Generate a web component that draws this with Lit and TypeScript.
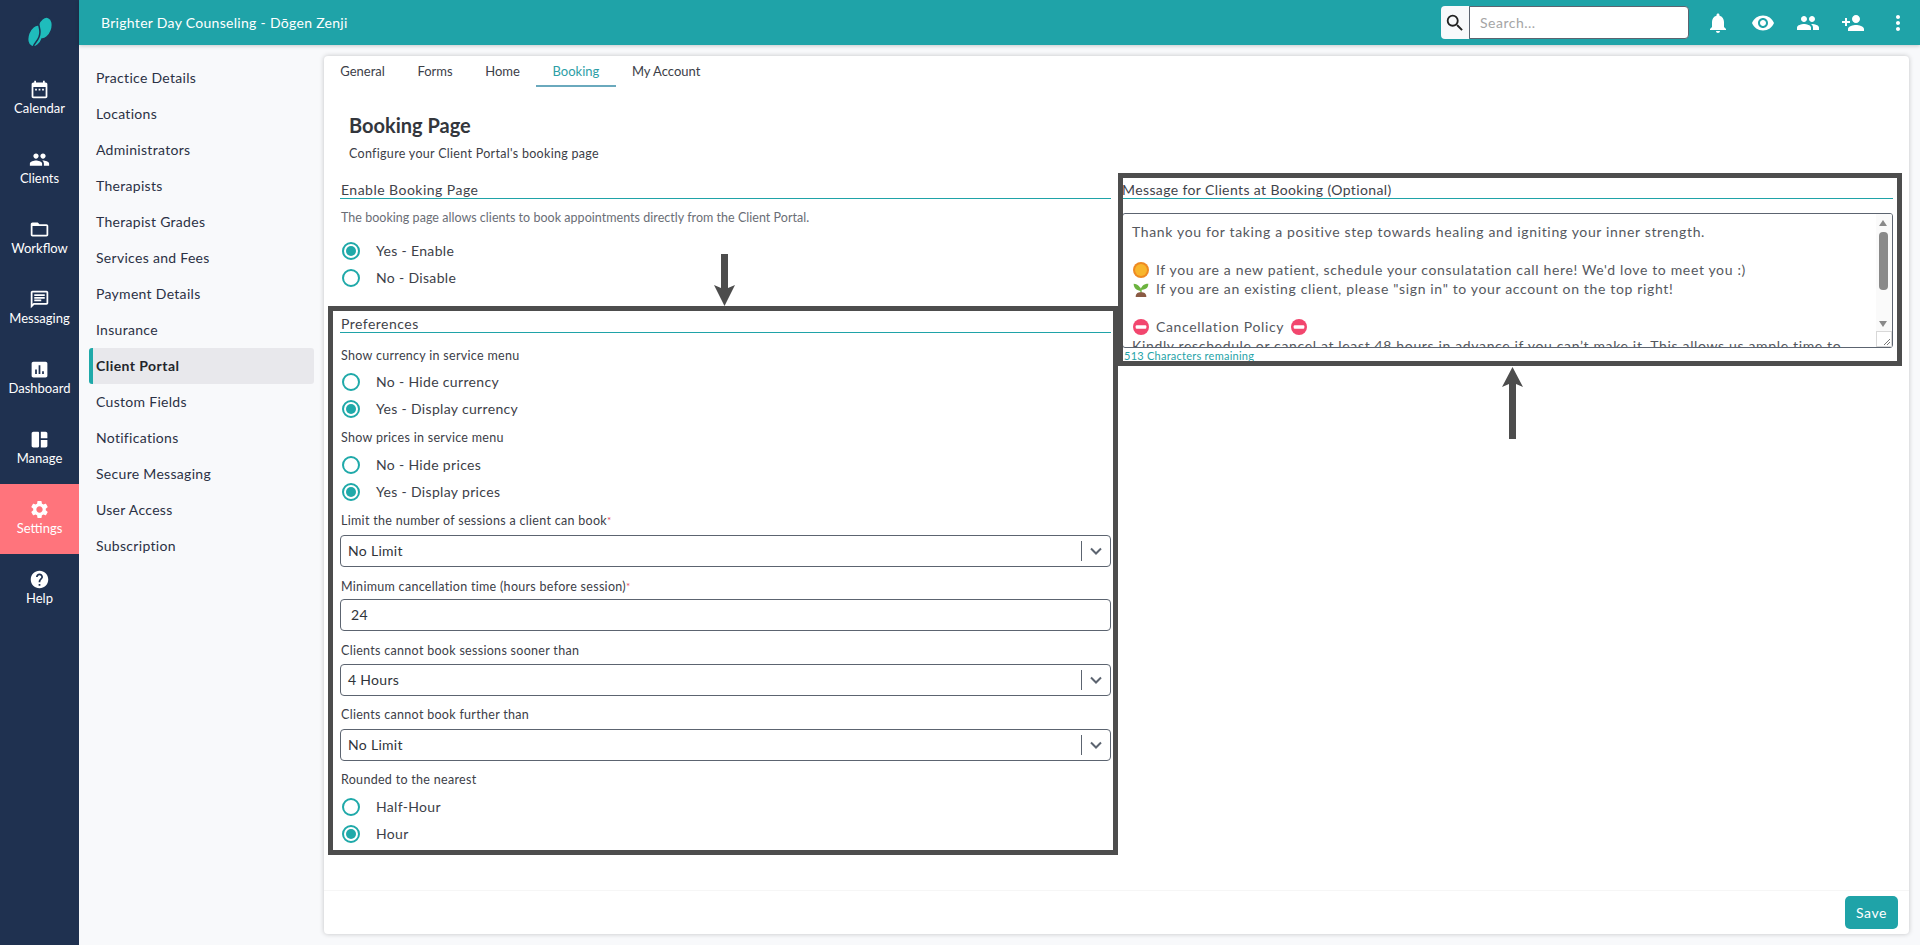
import { LitElement, html, css, svg } from "lit";
import { customElement } from "lit/decorators.js";

const railIcons: Record<string, unknown> = {
  Calendar: svg`<path d="M19 4h-1V2h-2v2H8V2H6v2H5C3.9 4 3 4.9 3 6v14c0 1.1.9 2 2 2h14c1.1 0 2-.9 2-2V6c0-1.1-.9-2-2-2zm0 16H5V9h14v11zM7 11h2v2H7zm4 0h2v2h-2zm4 0h2v2h-2z"/>`,
  Clients: svg`<path d="M16 11c1.66 0 2.99-1.34 2.99-3S17.66 5 16 5s-3 1.34-3 3 1.34 3 3 3zm-8 0c1.66 0 2.99-1.34 2.99-3S9.66 5 8 5 5 6.34 5 8s1.34 3 3 3zm0 2c-2.33 0-7 1.17-7 3.5V19h14v-2.5C15 14.17 10.33 13 8 13zm8 0c-.29 0-.62.02-.97.05 1.16.84 1.97 1.97 1.97 3.45V19h6v-2.5c0-2.33-4.67-3.5-7-3.5z"/>`,
  Workflow: svg`<path d="M20 6h-8l-2-2H4c-1.1 0-2 .9-2 2v12c0 1.1.9 2 2 2h16c1.1 0 2-.9 2-2V8c0-1.1-.9-2-2-2zm0 12H4V8h16v10z"/>`,
  Messaging: svg`<path d="M20 2H4c-1.1 0-2 .9-2 2v18l4-4h14c1.1 0 2-.9 2-2V4c0-1.1-.9-2-2-2zm0 14H5.2L4 17.2V4h16v12zM6 12h8v2H6zm0-3h12v2H6zm0-3h12v2H6z"/>`,
  Dashboard: svg`<path d="M19 3H5c-1.1 0-2 .9-2 2v14c0 1.1.9 2 2 2h14c1.1 0 2-.9 2-2V5c0-1.1-.9-2-2-2zM9 17H7v-5h2v5zm4 0h-2V7h2v10zm4 0h-2v-3h2v3z"/>`,
  Manage: svg`<path d="M5 3h5c1.1 0 1.5.5 1.5 1.5v15c0 1-.4 1.5-1.5 1.5H5c-1.1 0-2-.9-2-2V5c0-1.1.9-2 2-2zm8.5 0H19c1.1 0 2 .9 2 2v5.5h-7.500V3zm0 9.500H21V19c0 1.100-.9 2-2 2h-5.500z"/>`,
  Settings: svg`<path d="M19.14 12.94c.04-.3.06-.61.06-.94 0-.32-.02-.64-.07-.94l2.03-1.58a.49.49 0 0 0 .12-.61l-1.92-3.32a.488.488 0 0 0-.59-.22l-2.39.96c-.5-.38-1.03-.7-1.62-.94l-.36-2.54a.484.484 0 0 0-.48-.41h-3.84c-.24 0-.43.17-.47.41l-.36 2.54c-.59.24-1.13.57-1.62.94l-2.39-.96c-.22-.08-.47 0-.59.22L2.74 8.87c-.12.21-.08.47.12.61l2.03 1.58c-.05.3-.09.63-.09.94s.02.64.07.94l-2.03 1.58a.49.49 0 0 0-.12.61l1.92 3.32c.12.22.37.29.59.22l2.39-.96c.5.38 1.03.7 1.62.94l.36 2.54c.05.24.24.41.48.41h3.84c.24 0 .44-.17.47-.41l.36-2.54c.59-.24 1.13-.56 1.62-.94l2.39.96c.22.08.47 0 .59-.22l1.92-3.32c.12-.22.07-.47-.12-.61l-2.01-1.58zM12 15.600c-1.980 0-3.600-1.620-3.600-3.600s1.620-3.600 3.600-3.600 3.600 1.620 3.600 3.600-1.620 3.600-3.600 3.600z"/>`,
  Help: svg`<path d="M12 2C6.480 2 2 6.480 2 12s4.480 10 10 10 10-4.480 10-10S17.520 2 12 2zm1 17h-2v-2h2v2zm2.070-7.750-.9.920C13.450 12.900 13 13.500 13 15h-2v-.5c0-1.100.45-2.100 1.170-2.830l1.240-1.260c.37-.36.59-.86.59-1.410 0-1.100-.9-2-2-2s-2 .9-2 2H8c0-2.210 1.790-4 4-4s4 1.790 4 4c0 .88-.36 1.680-.93 2.250z"/>`,
};

const topIcons = {
  bell: svg`<path d="M12 22c1.100 0 2-.9 2-2h-4c0 1.100.9 2 2 2zm6-6v-5c0-3.070-1.630-5.640-4.500-6.320V4c0-.83-.67-1.500-1.500-1.500s-1.500.67-1.500 1.500v.68C7.640 5.360 6 7.920 6 11v5l-2 2v1h16v-1l-2-2z"/>`,
  eye: svg`<path d="M12 4.500C7 4.500 2.730 7.610 1 12c1.730 4.390 6 7.500 11 7.500s9.270-3.110 11-7.500c-1.730-4.390-6-7.500-11-7.500zM12 17c-2.760 0-5-2.240-5-5s2.240-5 5-5 5 2.240 5 5-2.240 5-5 5zm0-8c-1.660 0-3 1.340-3 3s1.340 3 3 3 3-1.340 3-3-1.340-3-3-3z"/>`,
  people: railIcons.Clients,
  add: svg`<path d="M15 12c2.210 0 4-1.790 4-4s-1.790-4-4-4-4 1.790-4 4 1.790 4 4 4zm-9-2V7H4v3H1v2h3v3h2v-3h3v-2H6zm9 4c-2.670 0-8 1.340-8 4v2h16v-2c0-2.660-5.330-4-8-4z"/>`,
  more: svg`<path d="M12 8c1.100 0 2-.9 2-2s-.9-2-2-2-2 .9-2 2 .9 2 2 2zm0 2c-1.100 0-2 .9-2 2s.9 2 2 2 2-.9 2-2-.9-2-2-2zm0 6c-1.100 0-2 .9-2 2s.9 2 2 2 2-.9 2-2-.9-2-2-2z"/>`,
};

@customElement("app-root")
export class AppRoot extends LitElement {
  static styles = css`
    :host { display: block; width: 1920px; height: 945px; overflow: hidden; position: relative;
      font-family: "Lato", "Open Sans", sans-serif; color: #3c4048; background: #f8f9fb; }
    * { box-sizing: border-box; }
    .shell { display: grid; grid-template-columns: 79px 1fr; height: 945px; }
    .rail { background: #1f3150; display: flex; flex-direction: column; padding-top: 64px; position: relative; }
    .logo { position: absolute; left: 28px; top: 17px; }
    .rail-item { height: 70px; display: flex; flex-direction: column; align-items: center; padding-top: 15px; color: #fff; font-size: 13px; font-weight: 400; line-height: 16px; }
    .rail-item svg { width: 21px; height: 21px; fill: #fff; }
    .rail-item.on { background: #ff747c; }
    .right { display: flex; flex-direction: column; min-width: 0; }
    .top { height: 45px; background: #1fa3a8; color: #fff; display: flex; align-items: center; padding-left: 22px; box-shadow: 0 1px 4px rgba(0,0,0,.2); position: relative; z-index: 2; }
    .brand { font-size: 14px; letter-spacing: .3px; flex: 1; }
    .search { display: flex; height: 33px; margin-right: 17px; }
    .search-btn { width: 28px; background: #f8f9fb; border-radius: 4px 0 0 4px; display: flex; align-items: center; justify-content: center; }
    .search-btn svg { width: 22px; height: 22px; fill: #222; }
    .search-in { width: 220px; background: #fff; border: 1px solid #5c6470; border-radius: 0 4px 4px 0; font-size: 14px; color: #a5a5a5; padding: 7px 10px; letter-spacing: .5px; }
    .top-icons { display: flex; gap: 21px; padding-right: 10px; align-items: center; }
    .top-icons svg { width: 24px; height: 24px; fill: #fff; display: block; }
    .body { flex: 1; display: grid; grid-template-columns: 245px 1fr; min-height: 0; }
    .sub { padding: 15px 10px 0 10px; }
    .sub-item { height: 36px; display: flex; align-items: center; padding: 0 0 1px 7px; font-size: 14px; letter-spacing: .3px; color: #2b3145; border-radius: 3px; }
    .sub-item.on { background: #e8e8ec; border-left: 4px solid #1fa9a9; padding-left: 3px; font-weight: 700; color: #23252b; letter-spacing: .45px; }
    .card { margin: 11px 11px 11px 0; background: #fff; border-radius: 4px; box-shadow: 0 0 5px rgba(0,0,0,.22); position: relative; display: flex; flex-direction: column; }
    .tabs { display: flex; height: 31px; }
    .tab { padding: 1px 16.3px 0; font-size: 13px; color: #3c4048; display: flex; align-items: center; border-bottom: 2px solid transparent; }
    .tab.on { color: #2d9ea6; border-bottom-color: #6aa9bd; }
    .head { padding: 25px 0 0 25px; }
    h1 { margin: 0; font-size: 20px; font-weight: 700; color: #33363c; line-height: 26px; }
    .head p { margin: 8px 0 0; font-size: 12.5px; line-height: 15px; color: #3c4048; letter-spacing: .3px; }
    .cols { display: grid; grid-template-columns: 771px 771px; column-gap: 11px; padding: 19px 0 0 16px; }
    .sec { font-size: 14px; letter-spacing: .47px; line-height: 20px; height: 19px; border-bottom: 1px solid #1fa3a8; color: #3f434a; padding-left: 1px; }
    .right-col .sec { padding-left: 0; letter-spacing: .38px; }
    .note { font-size: 12.5px; color: #6a6e76; line-height: 16px; margin-top: 11px; margin-bottom: 1px; padding-left: 1px; letter-spacing: .03px; }
    .radio { display: flex; align-items: center; height: 27px; font-size: 14px; letter-spacing: .33px; color: #3c4048; padding-left: 2px; gap: 16px; }
    .radio-text { padding-bottom: 1px; }
    .dot { width: 18px; height: 18px; border-radius: 50%; border: 2px solid #1fa9a9; display: flex; align-items: center; justify-content: center; }
    .dot.on::after { content: ""; width: 10px; height: 10px; border-radius: 50%; background: #1fa9a9; }
    .lab { font-size: 12.5px; color: #3c4048; line-height: 15px; padding-left: 1px; letter-spacing: .3px; }
    .req { color: #e34a5a; font-size: 10px; vertical-align: top; }
    .field { height: 32px; border: 1px solid #5c6470; border-radius: 4px; display: flex; align-items: center; padding: 0 0 1px 7px; font-size: 14px; color: #30343a; letter-spacing: .3px; }
    .field.input { padding-left: 10px; }
    .field .val { flex: 1; }
    .caret { width: 29px; height: 20px; margin-top: 1px; border-left: 1px solid #5c6470; display: flex; align-items: center; justify-content: center; }
    .caret svg { width: 12px; height: 8px; fill: none; stroke: #5c6470; stroke-width: 2; }
    .ta { margin-top: 14px; height: 135px; border: 1px solid #5c6470; border-radius: 3px; overflow: hidden; position: relative; padding: 8px 0 0 9px; font-size: 14px; letter-spacing: .65px; line-height: 19px; color: #55585e; white-space: nowrap; }
    .ta-line { height: 19px; display: flex; align-items: center; }
    .ta-line svg { width: 16px; height: 16px; flex: none; margin: 0 7px 0 1px; }
    .ta-line svg.end { margin: 0 0 0 7px; }
    .sbar { position: absolute; right: 0; top: 0; bottom: 0; width: 16px; background: #fafafa; }
    .sbar i { position: absolute; left: 3px; width: 0; height: 0; border-left: 4.5px solid transparent; border-right: 4.5px solid transparent; }
    .sbar .up { top: 6px; border-bottom: 6px solid #8a8a8a; }
    .sbar .dn { top: 107px; border-top: 6px solid #8a8a8a; }
    .sbar .th { position: absolute; left: 3px; top: 18px; width: 9px; height: 58px; background: #8a8a8a; border-radius: 4px; }
    .grip { position: absolute; right: 0; bottom: 0; width: 16px; height: 16px; background: #fff; border: 1px solid #d8d8d8; }
    .grip svg { position: absolute; right: 0; bottom: 0; width: 10px; height: 10px; stroke: #777; fill: none; }
    .count { font-size: 11px; color: #1fa3a8; line-height: 14px; margin-top: 1px; padding-left: 2px; letter-spacing: .25px; }
    .foot { position: absolute; left: 0; right: 0; bottom: 0; height: 44px; border-top: 1px solid #f6f6f6; display: flex; justify-content: flex-end; align-items: flex-start; padding: 5px 11px 0 0; }
    .save { background: #1fa3a8; color: #fff; border-radius: 5px; font-size: 14px; letter-spacing: .6px; width: 53px; height: 33px; display: flex; align-items: center; justify-content: center; }
    .ann { position: absolute; border: 5px solid #4d4d4d; pointer-events: none; }
    .a1 { left: 4px; top: 250px; width: 790px; height: 549px; }
    .a2 { left: 794px; top: 117px; width: 784px; height: 193px; }
    .arrow { position: absolute; fill: #4d4d4d; }
    .ar1 { left: 390px; top: 198px; }
    .ar2 { left: 1178px; top: 311px; }
    .s4 { height: 4px; } .s5 { height: 5px; } .s6 { height: 6px; } .s7 { height: 7px; } .s8 { height: 8px; }
    .s9 { height: 9px; } .s10 { height: 10px; } .s11 { height: 11px; } .s12 { height: 12px; } .s15 { height: 15px; } .s23 { height: 23px; }
  `;

  radio(label: string, on = false) {
    return html`<div class="radio"><span class="dot ${on ? "on" : ""}"></span><span class="radio-text">${label}</span></div>`;
  }

  select(v: string) {
    return html`<div class="field"><span class="val">${v}</span><span class="caret"><svg viewBox="0 0 12 8"><path d="M1 1.500l5 5 5-5"/></svg></span></div>`;
  }

  render() {
    const rail = ["Calendar", "Clients", "Workflow", "Messaging", "Dashboard", "Manage", "Settings", "Help"];
    const sub = ["Practice Details", "Locations", "Administrators", "Therapists", "Therapist Grades", "Services and Fees", "Payment Details", "Insurance", "Client Portal", "Custom Fields", "Notifications", "Secure Messaging", "User Access", "Subscription"];
    const tabs = ["General", "Forms", "Home", "Booking", "My Account"];
    const stop = svg`<circle cx="12" cy="12" r="12" fill="#f2466e"/><rect x="4" y="9.500" width="16" height="5" rx="1.500" fill="#fff"/>`;
    return html`<div class="shell">
      <nav class="rail">
        <svg class="logo" width="24" height="30" viewBox="0 0 24 30"><ellipse cx="7.500" cy="19" rx="6.500" ry="10.500" transform="rotate(20 7.500 19)" fill="#1fbcbc"/><ellipse cx="16.500" cy="11" rx="6.500" ry="10.500" transform="rotate(20 16.500 11)" fill="#1fbcbc"/><path d="M11.500 0C8 8 14.500 12 11 20 9.500 24 6.500 26 5 30" fill="none" stroke="#1f3150" stroke-width="1.500"/></svg>
        ${rail.map((r) => html`<div class="rail-item ${r === "Settings" ? "on" : ""}"><svg viewBox="0 0 24 24">${railIcons[r]}</svg><span>${r}</span></div>`)}
      </nav>
      <div class="right">
        <header class="top">
          <div class="brand">Brighter Day Counseling - Dōgen Zenji</div>
          <div class="search">
            <div class="search-btn"><svg viewBox="0 0 24 24"><path d="M15.500 14h-.79l-.28-.27A6.470 6.470 0 0 0 16 9.500 6.500 6.500 0 1 0 9.500 16c1.610 0 3.090-.59 4.230-1.570l.27.28v.79l5 4.990L20.490 19l-4.990-5zm-6 0C7.010 14 5 11.990 5 9.500S7.010 5 9.500 5 14 7.010 14 9.500 11.990 14 9.500 14z"/></svg></div>
            <div class="search-in">Search...</div>
          </div>
          <div class="top-icons">
            ${Object.values(topIcons).map((i) => html`<svg viewBox="0 0 24 24">${i}</svg>`)}
          </div>
        </header>
        <div class="body">
          <aside class="sub">${sub.map((s) => html`<div class="sub-item ${s === "Client Portal" ? "on" : ""}">${s}</div>`)}</aside>
          <main class="card">
            <div class="tabs">${tabs.map((t) => html`<div class="tab ${t === "Booking" ? "on" : ""}">${t}</div>`)}</div>
            <div class="head"><h1>Booking Page</h1><p>Configure your Client Portal's booking page</p></div>
            <div class="cols">
              <div>
                <div class="sec">Enable Booking Page</div>
                <div class="note">The booking page allows clients to book appointments directly from the Client Portal.</div>
                <div class="s10"></div>
                ${this.radio("Yes - Enable", true)}${this.radio("No - Disable")}
                <div class="s23"></div>
                <div class="sec">Preferences</div>
                <div class="s15"></div>
                <div class="lab">Show currency in service menu</div>
                <div class="s5"></div>
                ${this.radio("No - Hide currency")}${this.radio("Yes - Display currency", true)}
                <div class="s8"></div>
                <div class="lab">Show prices in service menu</div>
                <div class="s6"></div>
                ${this.radio("No - Hide prices")}${this.radio("Yes - Display prices", true)}
                <div class="s8"></div>
                <div class="lab">Limit the number of sessions a client can book<span class="req">*</span></div>
                <div class="s7"></div>
                ${this.select("No Limit")}
                <div class="s12"></div>
                <div class="lab">Minimum cancellation time (hours before session)<span class="req">*</span></div>
                <div class="s5"></div>
                <div class="field input">24</div>
                <div class="s12"></div>
                <div class="lab">Clients cannot book sessions sooner than</div>
                <div class="s6"></div>
                ${this.select("4 Hours")}
                <div class="s11"></div>
                <div class="lab">Clients cannot book further than</div>
                <div class="s7"></div>
                ${this.select("No Limit")}
                <div class="s11"></div>
                <div class="lab">Rounded to the nearest</div>
                <div class="s6"></div>
                ${this.radio("Half-Hour")}${this.radio("Hour", true)}
              </div>
              <div class="right-col">
                <div class="sec">Message for Clients at Booking (Optional)</div>
                <div class="ta">
                  <div class="ta-line">Thank you for taking a positive step towards healing and igniting your inner strength.</div>
                  <div class="ta-line"></div>
                  <div class="ta-line"><svg viewBox="0 0 24 24"><circle cx="12" cy="12" r="12" fill="#ee8a22"/><circle cx="12" cy="12" r="9" fill="#f8b62d"/></svg>If you are a new patient, schedule your consulatation call here! We'd love to meet you :)</div>
                  <div class="ta-line"><svg viewBox="0 0 24 24"><path d="M12 15C12 9 8 5 1 4c0 7 5 10 11 11zM12 13c0-5 4-9 11-9 0 7-5 9-11 9z" fill="#6cb33f"/><path d="M11 10h2v9h-2z" fill="#6cb33f"/><path d="M4 24c0-5 3-7 8-7s8 2 8 7z" fill="#8a5a44"/></svg>If you are an existing client, please "sign in" to your account on the top right!</div>
                  <div class="ta-line"></div>
                  <div class="ta-line"><svg viewBox="0 0 24 24">${stop}</svg>Cancellation Policy<svg class="end" viewBox="0 0 24 24">${stop}</svg></div>
                  <div class="ta-line">Kindly reschedule or cancel at least 48 hours in advance if you can’t make it. This allows us ample time to</div>
                  <div class="sbar"><i class="up"></i><div class="th"></div><i class="dn"></i></div>
                  <div class="grip"><svg viewBox="0 0 10 10"><path d="M9 3L3 9M9 6L6 9"/></svg></div>
                </div>
                <div class="count">513 Characters remaining</div>
              </div>
            </div>
            <div class="foot"><div class="save">Save</div></div>
            <div class="ann a1"></div>
            <div class="ann a2"></div>
            <svg class="arrow ar1" width="21" height="52" viewBox="0 0 21 52"><path d="M7 0h7v34l7-3-10.500 21L0 31l7 3z"/></svg>
            <svg class="arrow ar2" width="21" height="72" viewBox="0 0 21 72"><path d="M10.500 0L21 20l-7-3v55H7V17l-7 3z"/></svg>
          </main>
        </div>
      </div>
    </div>`;
  }
}
